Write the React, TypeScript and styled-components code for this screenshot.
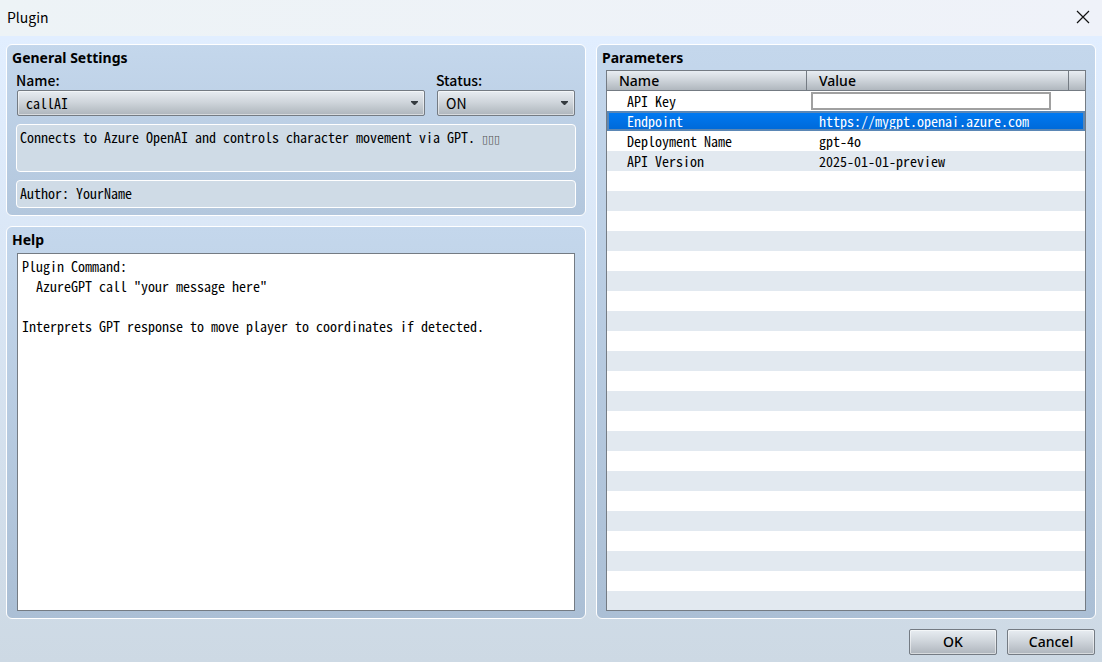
import React, { useState } from "react";
import styled, { createGlobalStyle, css } from "styled-components";

const heading = '"Noto Sans", sans-serif';
const ui = '"Noto Sans CJK JP", "Noto Sans", sans-serif';
const mono = '"Noto Sans Mono CJK JP", "Noto Sans CJK JP", monospace';

const GlobalStyle = createGlobalStyle`
  * { box-sizing: border-box; }
  body { margin: 0; font: 14px/20px ${ui}; color: #000; }
`;

const metal = css`
  border: 1px solid #747b83;
  border-radius: 2px;
  background: linear-gradient(#e8edf2, #d0d6dc 45%, #aeb5bc);
  box-shadow: inset 0 0 0 1px rgba(255, 255, 255, 0.5);
  color: #000;
`;

const Dialog = styled.div`
  display: flex;
  flex-direction: column;
  min-height: 100vh;
  background: linear-gradient(#e1eeff 36px, #cdd9e4);
`;

const TitleBar = styled.header`
  display: flex;
  align-items: center;
  justify-content: space-between;
  height: 36px;
  padding: 0 12px 2px 7px;
  background: linear-gradient(90deg, #edf3f6, #eff2f9);
`;

const Title = styled.h1`
  margin: 0;
  font: 400 14px/20px ${ui};
`;

const CloseButton = styled.button`
  display: flex;
  padding: 0;
  border: 0;
  background: none;
  color: #111;
`;

const Content = styled.main`
  display: grid;
  grid-template-columns: 58fr 50fr;
  gap: 10px;
  flex: 1;
  padding: 8px 6px 0;
`;

const Column = styled.div`
  display: flex;
  flex-direction: column;
  gap: 10px;
  min-width: 0;
`;

const Panel = styled.section<{ $grow?: boolean }>`
  display: flex;
  flex-direction: column;
  flex: ${(p) => (p.$grow ? "1" : "none")};
  padding: 3px 9px 7px;
  border: 1px solid #fff;
  border-radius: 6px;
  background: linear-gradient(#c4d7ec, ${(p) => (p.$grow ? "#abbfd5" : "#b3c7dd")});
`;

const PanelTitle = styled.h2`
  margin: 0 0 2px -4px;
  font: 700 14px/20px ${heading};
`;

const Fields = styled.div`
  display: grid;
  grid-template-columns: 408fr 138fr;
  gap: 12px;
  margin-bottom: 8px;
  padding: 0 1px;
`;

const Field = styled.div`
  display: flex;
  flex-direction: column;
`;

const Label = styled.label`
  margin-left: -1px;
  font: 500 14px/20px ${ui};
`;

const SelectBox = styled.div`
  position: relative;
`;

const Select = styled.select<{ $mono?: boolean }>`
  ${metal}
  display: block;
  width: 100%;
  height: 26px;
  padding: 0 20px 0 8px;
  appearance: none;
  font: ${(p) => (p.$mono ? `14px ${mono}` : `14px ${ui}`)};
`;

const Arrow = styled.svg`
  position: absolute;
  top: 11px;
  right: 7px;
  pointer-events: none;
`;

const InfoBox = styled.div<{ $lines: number }>`
  min-height: ${(p) => p.$lines * 20 + 8}px;
  padding: 2px 3px;
  border: 1px solid #fff;
  border-radius: 4px;
  background: #cfdbe6;
  font: 14px/20px ${mono};

  & + & {
    margin-top: 8px;
  }
`;

const MissingGlyphs = styled.span`
  font: 11px/14px "DejaVu Sans", sans-serif;
  color: #555;
`;

const HelpText = styled.textarea`
  display: block;
  flex: 1;
  margin: 1px 1px 0;
  padding: 2px 4px;
  border: 1px solid #747b83;
  border-radius: 0;
  outline: 0;
  resize: none;
  background: #fff;
  color: #000;
  font: 14px/20px ${mono};
`;

const TableFrame = styled.div`
  flex: 1;
  border: 1px solid #747b83;
  background: repeating-linear-gradient(#e2e9f0 0 20px, #fff 20px 40px);
`;

const Table = styled.table`
  width: 100%;
  table-layout: fixed;
  border-collapse: separate;
  border-spacing: 0;
`;

const HeadCell = styled.th<{ $width?: string }>`
  width: ${(p) => p.$width ?? "auto"};
  height: 20px;
  padding: 0 12px;
  border-right: 1px solid #747b83;
  border-bottom: 1px solid #747b83;
  background: linear-gradient(#e8edf2, #d0d6dc 45%, #b0b7be);
  font: 500 14px/19px ${heading};
  text-align: left;

  &:last-child {
    padding: 0;
    border-right: 0;
  }
`;

const Row = styled.tr<{ $selected: boolean }>`
  background: ${(p) => (p.$selected ? "linear-gradient(#007bf5, #0068d6)" : "none")};
  color: ${(p) => (p.$selected ? "#fff" : "#000")};
  outline: ${(p) => (p.$selected ? "2px solid #5b87b5" : "none")};
  outline-offset: -2px;
`;

const Cell = styled.td<{ $indent?: boolean }>`
  height: 20px;
  padding: 0 0 0 ${(p) => (p.$indent ? 20 : 12)}px;
  font: 14px/20px ${mono};
  white-space: nowrap;
`;

const KeyCell = styled(Cell)`
  padding: 1px 18px 1px 4px;
`;

const KeyInput = styled.input`
  display: block;
  width: 100%;
  height: 18px;
  padding: 0 4px;
  border: 2px solid #a0a0a0;
  border-radius: 0;
  outline: 0;
  background: #fff;
  font: 12px/14px ${mono};
`;

const Footer = styled.footer`
  display: flex;
  justify-content: flex-end;
  gap: 10px;
  padding: 10px 7px 7px;
`;

const Button = styled.button`
  ${metal}
  width: 88px;
  height: 26px;
  padding: 0;
  font: 500 14px/20px ${heading};
`;

const help = `Plugin Command:
  AzureGPT call "your message here"

Interprets GPT response to move player to coordinates if detected.`;

const parameters = [
  { name: "API Key", value: "" },
  { name: "Endpoint", value: "https://mygpt.openai.azure.com" },
  { name: "Deployment Name", value: "gpt-4o" },
  { name: "API Version", value: "2025-01-01-preview" },
];

function DropDown({ id, options, $mono }: { id: string; options: string[]; $mono?: boolean }) {
  return (
    <SelectBox>
      <Select id={id} $mono={$mono}>
        {options.map((o) => (
          <option key={o}>{o}</option>
        ))}
      </Select>
      <Arrow width="7" height="4" viewBox="0 0 7 4" aria-hidden="true">
        <path d="M0 0h7v1L4 4H3L0 1z" fill="#353b3f" />
      </Arrow>
    </SelectBox>
  );
}

export default function App() {
  const [selected, setSelected] = useState("Endpoint");
  return (
    <>
      <GlobalStyle />
      <Dialog role="dialog" aria-label="Plugin">
        <TitleBar>
          <Title>Plugin</Title>
          <CloseButton aria-label="Close">
            <svg width="14" height="14" viewBox="0 0 14 14" fill="none" stroke="currentColor" strokeWidth="1.2">
              <path d="M1 1l12 12M13 1L1 13" />
            </svg>
          </CloseButton>
        </TitleBar>
        <Content>
          <Column>
            <Panel>
              <PanelTitle>General Settings</PanelTitle>
              <Fields>
                <Field>
                  <Label htmlFor="name">Name:</Label>
                  <DropDown id="name" options={["callAI"]} $mono />
                </Field>
                <Field>
                  <Label htmlFor="status">Status:</Label>
                  <DropDown id="status" options={["ON", "OFF"]} />
                </Field>
              </Fields>
              <InfoBox $lines={2}>
                Connects to Azure OpenAI and controls character movement via GPT. <MissingGlyphs>▯▯▯</MissingGlyphs>
              </InfoBox>
              <InfoBox $lines={1}>Author: YourName</InfoBox>
            </Panel>
            <Panel $grow>
              <PanelTitle id="help-title">Help</PanelTitle>
              <HelpText readOnly aria-labelledby="help-title" value={help} />
            </Panel>
          </Column>
          <Panel $grow>
            <PanelTitle>Parameters</PanelTitle>
            <TableFrame>
              <Table>
                <thead>
                  <tr>
                    <HeadCell $width="200px">Name</HeadCell>
                    <HeadCell>Value</HeadCell>
                    <HeadCell $width="16px" aria-hidden="true" />
                  </tr>
                </thead>
                <tbody>
                  {parameters.map(({ name, value }) => (
                    <Row key={name} $selected={name === selected} onClick={() => setSelected(name)}>
                      <Cell $indent>{name}</Cell>
                      {name === "API Key" ? (
                        <KeyCell>
                          <KeyInput aria-label={name} />
                        </KeyCell>
                      ) : (
                        <Cell>{value}</Cell>
                      )}
                      <Cell />
                    </Row>
                  ))}
                </tbody>
              </Table>
            </TableFrame>
          </Panel>
        </Content>
        <Footer>
          <Button>OK</Button>
          <Button>Cancel</Button>
        </Footer>
      </Dialog>
    </>
  );
}
